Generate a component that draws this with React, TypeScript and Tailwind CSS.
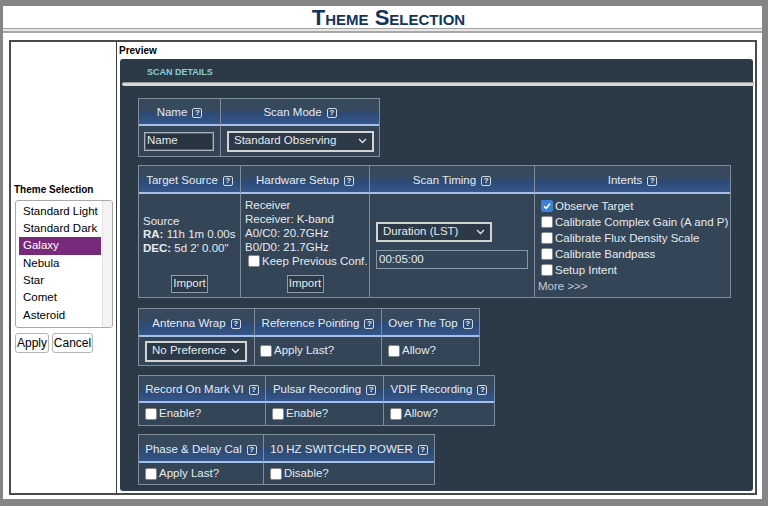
import React, { ReactNode } from "react";

const HEAD =
  "bg-[linear-gradient(180deg,#37495c_0%,#37495c_40%,#2d4a76_58%,#35568a_100%)] border-b-2 border-b-[#a6c0ea]";

function Help() {
  return (
    <span className="ml-[5px] inline-flex h-[10px] w-[10px] items-center justify-center rounded-[2px] border border-[#cfd7e0] text-[8px] font-bold leading-none text-[#eef2f6]">
      ?
    </span>
  );
}

function Check({ on }: { on?: boolean }) {
  if (on)
    return (
      <span className="inline-flex h-[12px] w-[12px] shrink-0 items-center justify-center rounded-[2px] bg-[#3b82d8]">
        <svg viewBox="0 0 12 12" width="10" height="10">
          <path d="M2.4 6.3 L5 8.8 L9.7 3.1" stroke="white" strokeWidth="1.8" fill="none" />
        </svg>
      </span>
    );
  return <span className="inline-block h-[12px] w-[12px] shrink-0 rounded-[2px] border border-[#8a8a8a] bg-white" />;
}

function CbRow({ label, on }: { label: string; on?: boolean }) {
  return (
    <div className="flex items-center gap-[2px] whitespace-nowrap">
      <Check on={on} />
      <span>{label}</span>
    </div>
  );
}

function Sel({ text, cls }: { text: string; cls: string }) {
  return (
    <div className={`${cls} flex items-center justify-between border-2 border-[#d3d3d3] bg-[#2c3946] pl-[5px] pr-[5px] text-[#e6ebf0]`}>
      <span className="whitespace-nowrap">{text}</span>
      <svg width="9" height="6" viewBox="0 0 9 6">
        <path d="M1 1 L4.5 4.5 L8 1" stroke="#e5e5e5" strokeWidth="1.3" fill="none" />
      </svg>
    </div>
  );
}

function Btn({ children }: { children: ReactNode }) {
  return (
    <div className="flex h-[18px] w-[37px] items-center justify-center border border-[#8f9caa] bg-[#2c3946] text-[#e6ebf0]">
      {children}
    </div>
  );
}

function Head({ children, first }: { children: ReactNode; first?: boolean }) {
  return (
    <div
      className={`${HEAD} flex items-center justify-center whitespace-nowrap pt-[3px] ${first ? "" : "border-l border-l-[#7e8c9b]"}`}
    >
      {children}
    </div>
  );
}

function Body({ children, first, cls }: { children?: ReactNode; first?: boolean; cls?: string }) {
  return <div className={`${first ? "" : "border-l border-l-[#7e8c9b]"} ${cls ?? ""}`}>{children}</div>;
}

const themes = ["Standard Light", "Standard Dark", "Galaxy", "Nebula", "Star", "Comet", "Asteroid"];

export default function App() {
  return (
    <div className="h-[506px] w-[768px] overflow-hidden bg-[#858585] pb-[7px] pl-[3px] pr-[6px] pt-[6px] font-['Liberation_Sans',Arial,sans-serif]">
      <div className="flex h-full flex-col bg-white">
        {/* title */}
        <div className="h-[22px] pl-[12px] text-center text-[22px] font-bold leading-[24px] text-[#13345c] [font-variant:small-caps]">
          Theme Selection
        </div>
        <div className="h-[5px] border-t border-t-[#a2a2a2] border-b-2 border-b-[#a8a8a8] bg-[#e6e6e6]" />

        {/* frame */}
        <div className="mb-[4px] ml-[6px] mr-[5px] mt-[7px] flex h-[455px] border-2 border-[#4a4a4a]">
          {/* left column */}
          <div className="flex w-[106px] shrink-0 flex-col justify-center border-r border-r-[#3c3c3c] pl-[3px]">
            <div className="mb-[3px] text-[10px] font-bold leading-[14px] text-black">Theme Selection</div>
            <div className="ml-[1px] flex h-[128px] w-[98px] overflow-hidden rounded-[3px] border border-[#a9a9a9] bg-white">
              <div className="flex-1 pl-[3px] pr-[1px] pt-[2px]">
                {themes.map((t) => (
                  <div
                    key={t}
                    className={`h-[17.4px] whitespace-nowrap pl-[4px] text-[11.5px] leading-[17.4px] ${
                      t === "Galaxy" ? "bg-[#782a7a] text-white" : "text-black"
                    }`}
                  >
                    {t}
                  </div>
                ))}
              </div>
              <div className="w-[10px] border-l border-l-[#e2e2e2] bg-[#f3f3f3]" />
            </div>
            <div className="ml-[1px] mt-[5px] flex gap-[3px] text-[12px] text-black">
              <div className="flex h-[20px] w-[34px] items-center justify-center rounded-[3px] border border-[#b5b5b5] bg-white">
                Apply
              </div>
              <div className="flex h-[20px] w-[41px] items-center justify-center rounded-[3px] border border-[#b5b5b5] bg-white">
                Cancel
              </div>
            </div>
          </div>

          {/* right column */}
          <div className="flex flex-1 flex-col pb-[2px] pl-[2px] pr-[2px]">
            <div className="pt-[2px] text-[10px] font-bold leading-[14px] text-black">Preview</div>
            <div className="ml-[1px] mt-[1px] flex flex-1 flex-col rounded-[3px] bg-[#2c3946] text-[11.5px] text-[#e6ebf0]">
              <div className="flex h-[23px] items-center pl-[27px] pt-[4px] text-[9px] font-bold text-[#8ecfd3]">
                SCAN DETAILS
              </div>
              <div className="-mr-[1px] ml-[2px] h-[4px] rounded-l-full border-t border-t-[#9a9a9a] bg-[#d6d6d6]" />

              <div className="flex flex-col items-start pl-[18px]">
                {/* table 1 */}
                <div className="mt-[12px] grid grid-cols-[81px_159px] grid-rows-[27px_30px] border border-[#7e8c9b] bg-[#344557]">
                  <Head first>
                    Name
                    <Help />
                  </Head>
                  <Head>
                    Scan Mode
                    <Help />
                  </Head>
                  <Body first cls="flex items-center pl-[5px]">
                    <div className="flex h-[19px] w-[70px] items-center border border-[#a9b1ba] bg-[#28343f] pl-[2px] shadow-[inset_0_0_0_1px_#56626e]">
                      Name
                    </div>
                  </Body>
                  <Body cls="flex items-center pl-[6px]">
                    <Sel text="Standard Observing" cls="w-[147px] h-[21px]" />
                  </Body>
                </div>

                {/* table 2 */}
                <div className="mt-[8px] grid grid-cols-[101px_129px_165px_196px] grid-rows-[28px_103px] border border-[#7e8c9b] bg-[#344557]">
                  <Head first>
                    Target Source
                    <Help />
                  </Head>
                  <Head>
                    Hardware Setup
                    <Help />
                  </Head>
                  <Head>
                    Scan Timing
                    <Help />
                  </Head>
                  <Head>
                    Intents
                    <Help />
                  </Head>
                  <Body first cls="flex flex-col">
                    <div className="flex flex-1 flex-col justify-center whitespace-nowrap pl-[4px] pt-[6px] leading-[13.5px]">
                      <div>Source</div>
                      <div>
                        <b>RA:</b> 11h 1m 0.00s
                      </div>
                      <div>
                        <b>DEC:</b> 5d 2' 0.00"
                      </div>
                    </div>
                    <div className="mb-[4px] mt-[5px] flex justify-center">
                      <Btn>Import</Btn>
                    </div>
                  </Body>
                  <Body cls="flex flex-col">
                    <div className="flex flex-1 flex-col justify-center whitespace-nowrap pl-[4px] pt-[2px] leading-[14px]">
                      <div>Receiver</div>
                      <div>Receiver: K-band</div>
                      <div>A0/C0: 20.7GHz</div>
                      <div>B0/D0: 21.7GHz</div>
                      <div className="pl-[3px]">
                        <CbRow label="Keep Previous Conf." />
                      </div>
                    </div>
                    <div className="mb-[4px] mt-[5px] flex justify-center">
                      <Btn>Import</Btn>
                    </div>
                  </Body>
                  <Body cls="flex flex-col justify-center pl-[6px]">
                    <Sel text="Duration (LST)" cls="w-[116px] h-[20px]" />
                    <div className="mt-[8px] flex h-[19px] w-[152px] items-center border border-[#8a96a4] bg-[#34465a] pl-[2px]">
                      00:05:00
                    </div>
                  </Body>
                  <Body cls="flex flex-col justify-center pl-[6px] pt-[1px] leading-[16px]">
                    <div className="h-[16px]">
                      <CbRow label="Observe Target" on />
                    </div>
                    <div className="h-[16px]">
                      <CbRow label="Calibrate Complex Gain (A and P)" />
                    </div>
                    <div className="h-[16px]">
                      <CbRow label="Calibrate Flux Density Scale" />
                    </div>
                    <div className="h-[16px]">
                      <CbRow label="Calibrate Bandpass" />
                    </div>
                    <div className="h-[16px]">
                      <CbRow label="Setup Intent" />
                    </div>
                    <div className="-ml-[3px] h-[16px] text-[#c5ccd4]">More &gt;&gt;&gt;</div>
                  </Body>
                </div>

                {/* table 3 */}
                <div className="mt-[10px] grid grid-cols-[115px_127px_98px] grid-rows-[28px_28px] border border-[#7e8c9b] bg-[#344557]">
                  <Head first>
                    Antenna Wrap
                    <Help />
                  </Head>
                  <Head>
                    Reference Pointing
                    <Help />
                  </Head>
                  <Head>
                    Over The Top
                    <Help />
                  </Head>
                  <Body first cls="flex items-center pl-[6px]">
                    <Sel text="No Preference" cls="w-[102px] h-[21px]" />
                  </Body>
                  <Body cls="flex items-center pl-[5px]">
                    <CbRow label="Apply Last?" />
                  </Body>
                  <Body cls="flex items-center pl-[6px]">
                    <CbRow label="Allow?" />
                  </Body>
                </div>

                {/* table 4 */}
                <div className="mt-[9px] grid grid-cols-[126px_118px_111px] grid-rows-[27px_22px] border border-[#7e8c9b] bg-[#344557]">
                  <Head first>
                    Record On Mark VI
                    <Help />
                  </Head>
                  <Head>
                    Pulsar Recording
                    <Help />
                  </Head>
                  <Head>
                    VDIF Recording
                    <Help />
                  </Head>
                  <Body first cls="flex items-center pl-[6px]">
                    <CbRow label="Enable?" />
                  </Body>
                  <Body cls="flex items-center pl-[6px]">
                    <CbRow label="Enable?" />
                  </Body>
                  <Body cls="flex items-center pl-[6px]">
                    <CbRow label="Allow?" />
                  </Body>
                </div>

                {/* table 5 */}
                <div className="mt-[8px] grid grid-cols-[124px_171px] grid-rows-[28px_21px] border border-[#7e8c9b] bg-[#344557]">
                  <Head first>
                    Phase &amp; Delay Cal
                    <Help />
                  </Head>
                  <Head>
                    10 HZ SWITCHED POWER
                    <Help />
                  </Head>
                  <Body first cls="flex items-center pl-[6px]">
                    <CbRow label="Apply Last?" />
                  </Body>
                  <Body cls="flex items-center pl-[6px]">
                    <CbRow label="Disable?" />
                  </Body>
                </div>
              </div>
            </div>
          </div>
        </div>
      </div>
    </div>
  );
}
